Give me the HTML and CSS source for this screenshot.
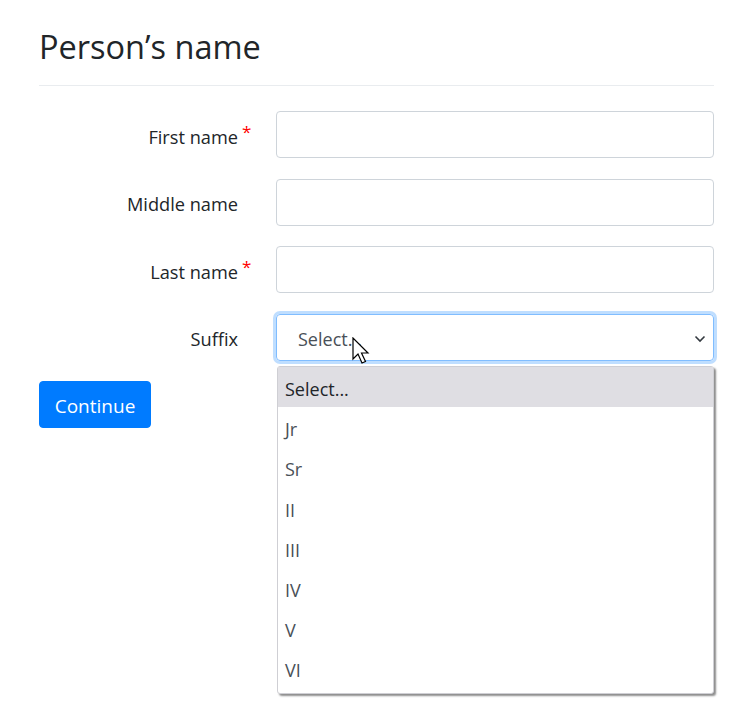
FILE: index.html
```html
<!DOCTYPE html>
<html>
<head>
<meta charset="utf-8">
<link rel="stylesheet" href="styles.css">
</head>
<body>
<main class="page">
  <h2 class="title">Person’s name</h2>
  <hr class="rule">
  <form class="form">
    <div class="row">
      <label class="label"><span class="label-text">First name<span class="req">*</span></span></label>
      <div class="field"><input class="input" type="text"></div>
    </div>
    <div class="row">
      <label class="label"><span class="label-text">Middle name</span></label>
      <div class="field"><input class="input" type="text"></div>
    </div>
    <div class="row">
      <label class="label"><span class="label-text">Last name<span class="req">*</span></span></label>
      <div class="field"><input class="input" type="text"></div>
    </div>
    <div class="row">
      <label class="label"><span class="label-text">Suffix</span></label>
      <div class="field select-wrap">
        <div class="select">
          <span class="select-value">Select...</span>
          <svg class="chevron" width="12" height="8" viewBox="0 0 12 8"><path d="M1.5 1.5 L6 6 L10.5 1.5" fill="none" stroke="#343a40" stroke-width="1.6"/></svg>
          <svg class="cursor" width="22" height="30" viewBox="0 0 22 30"><path d="M1 1 L1 22 L6 17 L10 26 L13.5 24.5 L9.5 16 L16 16 Z" fill="#fff" stroke="#000" stroke-width="1.2" stroke-linejoin="miter"/></svg>
        </div>
        <ul class="menu">
          <li class="opt active">Select...</li>
          <li class="opt">Jr</li>
          <li class="opt">Sr</li>
          <li class="opt">II</li>
          <li class="opt">III</li>
          <li class="opt">IV</li>
          <li class="opt">V</li>
          <li class="opt">VI</li>
        </ul>
      </div>
    </div>
    <div class="actions">
      <button class="btn" type="button">Continue</button>
    </div>
  </form>
</main>
</body>
</html>
```
FILE: styles.css
```css
* { box-sizing: border-box; }
html, body { min-height: 721px; }
body {
  margin: 0;
  font-family: "Open Sans", "Noto Sans", sans-serif;
  color: #212529;
  background: #fff;
}
.page {
  width: 675px;
  margin-left: 39px;
  padding-top: 25px;
  min-height: 721px;
}
.title {
  margin: 0;
  font-weight: 400;
  font-size: 32.5px;
  line-height: 44px;
}
.rule {
  margin: 16px 0 25px;
  border: 0;
  border-top: 1px solid #e9ecef;
}
.form {
  display: flex;
  flex-direction: column;
  gap: 20.5px;
}
.row {
  display: grid;
  grid-template-columns: 237px 1fr;
  height: 47px;
}
.label {
  display: flex;
  align-items: center;
  justify-content: flex-end;
  padding-right: 38px;
  padding-top: 4px;
  font-size: 18.2px;
}
.label-text { position: relative; }
.req {
  position: absolute;
  left: calc(100% + 4px);
  top: -5px;
  color: #ff0000;
  font-size: 17px;
}
.field { position: relative; }
.input {
  display: block;
  width: 100%;
  height: 100%;
  border: 1px solid #ced4da;
  border-radius: 4px;
  background: #fff;
  font: inherit;
}
.select {
  position: relative;
  height: 100%;
  border: 1px solid #80bdff;
  border-radius: 4px;
  box-shadow: 0 0 0 3px rgba(0, 123, 255, 0.25);
  display: flex;
  align-items: center;
  padding-left: 21px;
  padding-top: 3px;
  font-size: 18px;
  color: #495057;
}
.chevron {
  position: absolute;
  right: 7px;
  top: 20px;
}
.cursor {
  position: absolute;
  left: 75px;
  top: 22px;
}
.menu {
  position: absolute;
  left: 1px;
  right: 0;
  top: calc(100% + 5.5px);
  margin: 0;
  padding: 0 0 4px;
  list-style: none;
  background: #fff;
  border: 1px solid #cfcfd4;
  border-radius: 3px;
  box-shadow: 2px 2px 2px rgba(0, 0, 0, 0.45);
  z-index: 2;
}
.opt {
  height: 40.2px;
  display: flex;
  align-items: center;
  padding-left: 7px;
  padding-top: 4px;
  font-size: 18px;
  color: #495057;
}
.opt.active {
  background: #dfdee3;
  color: #212529;
}
.btn {
  height: 47px;
  width: 112px;
  border: 1px solid #007bff;
  background: #007bff;
  color: #fff;
  border-radius: 4px;
  font-family: inherit;
  font-size: 19px;
  padding: 2px 0 0;
}
```
